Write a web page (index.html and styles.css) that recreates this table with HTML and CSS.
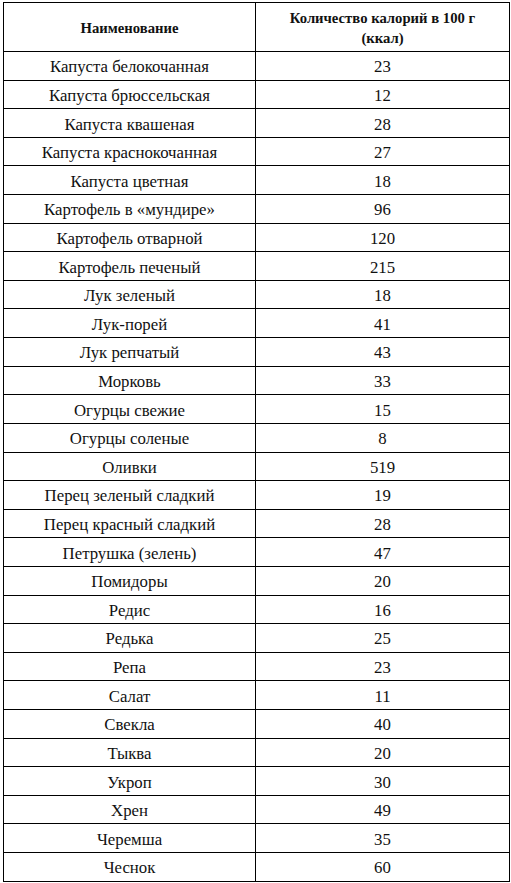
FILE: index.html
```html
<!DOCTYPE html>
<html lang="ru">
<head>
<meta charset="utf-8">
<title>Калорийность овощей</title>
<link rel="stylesheet" href="styles.css">
</head>
<body>
<table class="cal">
  <thead>
    <tr class="head"><th class="name">Наименование</th><th class="val">Количество калорий в 100 г<br>(ккал)</th></tr>
  </thead>
  <tbody>
    <tr><td>Капуста белокочанная</td><td>23</td></tr>
    <tr><td>Капуста брюссельская</td><td>12</td></tr>
    <tr><td>Капуста квашеная</td><td>28</td></tr>
    <tr><td>Капуста краснокочанная</td><td>27</td></tr>
    <tr><td>Капуста цветная</td><td>18</td></tr>
    <tr><td>Картофель в «мундире»</td><td>96</td></tr>
    <tr><td>Картофель отварной</td><td>120</td></tr>
    <tr><td>Картофель печеный</td><td>215</td></tr>
    <tr><td>Лук зеленый</td><td>18</td></tr>
    <tr><td>Лук-порей</td><td>41</td></tr>
    <tr><td>Лук репчатый</td><td>43</td></tr>
    <tr><td>Морковь</td><td>33</td></tr>
    <tr><td>Огурцы свежие</td><td>15</td></tr>
    <tr><td>Огурцы соленые</td><td>8</td></tr>
    <tr><td>Оливки</td><td>519</td></tr>
    <tr><td>Перец зеленый сладкий</td><td>19</td></tr>
    <tr><td>Перец красный сладкий</td><td>28</td></tr>
    <tr><td>Петрушка (зелень)</td><td>47</td></tr>
    <tr><td>Помидоры</td><td>20</td></tr>
    <tr><td>Редис</td><td>16</td></tr>
    <tr><td>Редька</td><td>25</td></tr>
    <tr><td>Репа</td><td>23</td></tr>
    <tr><td>Салат</td><td>11</td></tr>
    <tr><td>Свекла</td><td>40</td></tr>
    <tr><td>Тыква</td><td>20</td></tr>
    <tr><td>Укроп</td><td>30</td></tr>
    <tr><td>Хрен</td><td>49</td></tr>
    <tr><td>Черемша</td><td>35</td></tr>
    <tr><td>Чеснок</td><td>60</td></tr>
  </tbody>
</table>
</body>
</html>
```
FILE: styles.css
```css
html, body {
  margin: 0;
  padding: 0;
  background: #fff;
}
body {
  padding: 2px 0 0 3px;
  font-family: "Liberation Serif", "DejaVu Serif", serif;
  color: #111;
}
.cal {
  border-collapse: collapse;
  width: 507px;
  table-layout: fixed;
  font-family: "Liberation Serif", "DejaVu Serif", serif;
}
.cal th, .cal td {
  font-family: "Liberation Serif", "DejaVu Serif", serif;
  border: 1.5px solid #000;
  text-align: center;
  padding: 0;
  vertical-align: middle;
}
.cal th {
  font-size: 14.7px;
  font-weight: bold;
  line-height: 20px;
  height: 47px;
  padding-top: 1px;
}
.cal .name { width: 251px; }
.cal td {
  font-size: 16.8px;
  height: 24.62px;
  line-height: 18px;
  padding-top: 3px;
}
```
